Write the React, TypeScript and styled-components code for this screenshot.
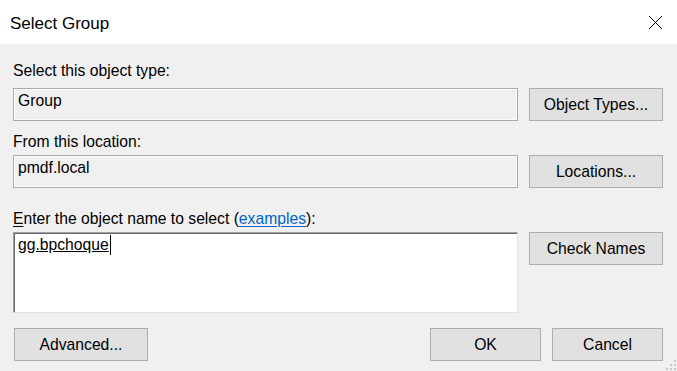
import React from "react";
import styled, { createGlobalStyle } from "styled-components";

const GlobalStyle = createGlobalStyle`
  html, body {
    margin: 0;
    padding: 0;
    background: #f0f0f0;
    overflow: hidden;
  }
`;

const Window = styled.div`
  position: relative;
  width: 677px;
  height: 371px;
  background: #f0f0f0;
  font: normal 15.7px "Liberation Sans", Arial, sans-serif;
  color: #000;
  overflow: hidden;
`;

const TitleBar = styled.div`
  height: 44px;
  background: #fff;
  display: flex;
  align-items: center;
  justify-content: space-between;
  padding: 0 14px 0 10px;
  box-sizing: border-box;
`;

const Title = styled.div`
  font-size: 17px;
  line-height: 20px;
  padding-top: 3px;
`;

const Body = styled.div`
  display: flex;
  flex-direction: column;
  padding: 18px 14px 0 13px;
`;

const Label = styled.div<{ $top?: number; $bottom?: number }>`
  line-height: 18px;
  height: 18px;
  margin-top: ${(p) => p.$top ?? 0}px;
  margin-bottom: ${(p) => p.$bottom ?? 0}px;
  white-space: nowrap;

  u {
    text-decoration: underline;
    text-underline-offset: 2px;
  }

  a {
    color: #0066cc;
    text-decoration: underline;
    text-underline-offset: 2px;
  }
`;

const Row = styled.div`
  display: flex;
  align-items: flex-start;
  gap: 11px;
`;

const ReadOnlyField = styled.div`
  box-sizing: border-box;
  width: 505px;
  height: 33px;
  border: 1px solid #a9a9a9;
  box-shadow: inset 0 0 0 1px #fcfcfc;
  background: #f0f0f0;
  padding: 3px 4px;
  line-height: 18px;
`;

const EditField = styled.div`
  box-sizing: border-box;
  width: 505px;
  height: 81px;
  background: #fff;
  border-style: solid;
  border-width: 1px;
  border-color: #a0a0a0 #e3e3e3 #e3e3e3 #a0a0a0;
  box-shadow: inset 1px 1px 0 #696969;
  padding: 2px 3px 0 4px;
  line-height: 18px;
`;

const Resolved = styled.span`
  text-decoration: underline;
  text-underline-offset: 1px;
`;

const Caret = styled.span`
  display: inline-block;
  width: 1px;
  height: 20px;
  margin-left: 1px;
  background: #000;
  vertical-align: -5px;
`;

const Button = styled.button<{ $width?: number }>`
  box-sizing: border-box;
  width: ${(p) => p.$width ?? 134}px;
  height: 33px;
  margin: 0;
  padding: 0;
  background: #e1e1e1;
  border: 1px solid #adadad;
  border-radius: 0;
  font: inherit;
  color: #000;
  display: flex;
  align-items: center;
  justify-content: center;
`;

const Footer = styled.div`
  display: flex;
  align-items: center;
  margin-top: 15px;
  padding-left: 1px;
`;

const Spacer = styled.div`
  flex: 1;
`;

const ButtonGroup = styled.div`
  display: flex;
  gap: 11px;
`;

const Grip = styled.svg`
  position: absolute;
  right: 0;
  bottom: 0;
`;

const CloseIcon = () => (
  <svg width="15" height="15" viewBox="0 0 15 15">
    <path d="M1 1 L14 14 M14 1 L1 14" stroke="#000" strokeWidth="1" fill="none" />
  </svg>
);

const App: React.FC = () => {
  return (
    <Window>
      <GlobalStyle />
      <TitleBar>
        <Title>Select Group</Title>
        <CloseIcon />
      </TitleBar>
      <Body>
        <Label $bottom={8}>Select this object type:</Label>
        <Row>
          <ReadOnlyField>Group</ReadOnlyField>
          <Button>Object Types...</Button>
        </Row>

        <Label $top={12} $bottom={4}>From this location:</Label>
        <Row>
          <ReadOnlyField>pmdf.local</ReadOnlyField>
          <Button>Locations...</Button>
        </Row>

        <Label $top={22} $bottom={4}>
          <u>E</u>nter the object name to select (<a>examples</a>):
        </Label>
        <Row>
          <EditField>
            <Resolved>gg.bpchoque</Resolved>
            <Caret />
          </EditField>
          <Button>Check Names</Button>
        </Row>

        <Footer>
          <Button>Advanced...</Button>
          <Spacer />
          <ButtonGroup>
            <Button $width={111}>OK</Button>
            <Button $width={111}>Cancel</Button>
          </ButtonGroup>
        </Footer>
      </Body>
      <Grip width="12" height="12" viewBox="0 0 12 12">
        <g fill="#c8c8c8">
          <rect x="9" y="1" width="2" height="2" />
          <rect x="9" y="5" width="2" height="2" />
          <rect x="5" y="5" width="2" height="2" />
          <rect x="9" y="9" width="2" height="2" />
          <rect x="5" y="9" width="2" height="2" />
          <rect x="1" y="9" width="2" height="2" />
        </g>
      </Grip>
    </Window>
  );
};

export default App;
